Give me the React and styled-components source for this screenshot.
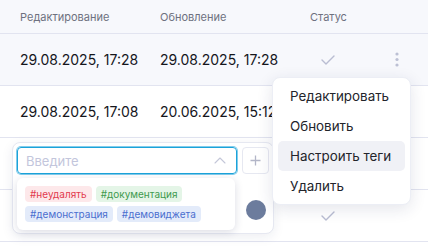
import * as React from "react";
import styled, { createGlobalStyle } from "styled-components";

const Global = createGlobalStyle`
  body {
    margin: 0;
    background: #ffffff;
    font-family: Inter, "Noto Sans", sans-serif;
  }
`;

const Table = styled.div`
  position: relative;
  width: 428px;
  height: 250px;
  overflow: hidden;
`;

const Row = styled.div`
  display: grid;
  grid-template-columns: 140px 150px 36px 1fr 62px;
  align-items: center;
  box-sizing: border-box;
  height: ${(p) => (p.head ? "34px" : "52px")};
  padding-left: 20px;
  border-bottom: 1px solid #e2e4f0;
  background: ${(p) => (p.tinted ? "#f7f8fc" : "#ffffff")};
`;

const HeadCell = styled.div`
  font-size: 11px;
  color: #6e717f;
  white-space: nowrap;
`;

const Cell = styled.div`
  font-size: 14px;
  color: #15161c;
  white-space: nowrap;
`;

const IconCell = styled.div`
  display: flex;
  justify-content: center;
  align-items: center;
`;

const Menu = styled.div`
  position: absolute;
  left: 272px;
  top: 77px;
  width: 139px;
  box-sizing: border-box;
  padding: 3px 5px;
  background: #ffffff;
  border: 1px solid #eceef5;
  border-radius: 8px;
  box-shadow: 0 4px 16px rgba(30, 40, 90, 0.12);
`;

const MenuItem = styled.div`
  height: 30px;
  display: flex;
  align-items: center;
  padding-left: 12px;
  border-radius: 5px;
  font-size: 13.4px;
  color: #23242b;
  background: ${(p) => (p.active ? "#f0f1f6" : "transparent")};
`;

const TagCard = styled.div`
  position: absolute;
  left: 12px;
  top: 142px;
  box-sizing: border-box;
  display: grid;
  grid-template-columns: 220px 27px;
  column-gap: 5px;
  row-gap: 26px;
  padding: 4px 4px 13px 4px;
  background: #ffffff;
  border: 1px solid #e6e8f1;
  border-radius: 8px;
  box-shadow: 0 3px 12px rgba(30, 40, 90, 0.08);
`;

const Input = styled.div`
  box-sizing: border-box;
  height: 27px;
  display: flex;
  align-items: center;
  justify-content: space-between;
  padding: 0 10px 0 8px;
  border: 1px solid #1ba3da;
  box-shadow: 0 0 0 1px rgba(27, 163, 218, 0.55);
  border-radius: 4px;
  font-size: 13px;
  color: #c3c6dc;
`;

const AddButton = styled.div`
  box-sizing: border-box;
  height: 27px;
  display: flex;
  align-items: center;
  justify-content: center;
  border: 1px solid #e6e8f1;
  border-radius: 4px;
`;

const Swatch = styled.div`
  grid-column: 2;
  justify-self: center;
  width: 20px;
  height: 20px;
  border-radius: 50%;
  background: #6c7c9d;
`;

const Dropdown = styled.div`
  position: absolute;
  left: 4px;
  top: 35px;
  width: 218px;
  box-sizing: border-box;
  padding: 8px 8px;
  display: flex;
  flex-wrap: wrap;
  gap: 4px;
  background: #ffffff;
  border-radius: 6px;
  box-shadow: 0 2px 8px rgba(30, 40, 90, 0.16);
`;

const tagColors = {
  red: ["#fde8ea", "#e23b4e"],
  green: ["#e4f5e7", "#3f9a4e"],
  blue: ["#e3ebfa", "#4b6fcf"],
};

const Tag = styled.span`
  height: 16px;
  display: inline-flex;
  align-items: center;
  padding: 0 5px;
  border-radius: 4px;
  font-size: 10px;
  background: ${(p) => tagColors[p.tone][0]};
  color: ${(p) => tagColors[p.tone][1]};
`;

const CheckIcon = () => (
  <svg width="14" height="10" viewBox="0 0 14 10" fill="none">
    <path d="M1 5l4 4 8-8" stroke="#b9bdd2" strokeWidth="1.4" strokeLinecap="round" strokeLinejoin="round" />
  </svg>
);

const Dots = () => (
  <svg width="4" height="15" viewBox="0 0 4 15">
    <circle cx="2" cy="2" r="1.6" fill="#bcc0d4" />
    <circle cx="2" cy="7.5" r="1.6" fill="#bcc0d4" />
    <circle cx="2" cy="13" r="1.6" fill="#bcc0d4" />
  </svg>
);

const Chevron = () => (
  <svg width="12" height="7" viewBox="0 0 12 7" fill="none">
    <path d="M1 6l5-5 5 5" stroke="#c4c7d8" strokeWidth="1.1" strokeLinecap="round" strokeLinejoin="round" />
  </svg>
);

const Plus = () => (
  <svg width="11" height="11" viewBox="0 0 11 11" fill="none">
    <path d="M5.5 0.5v10M0.5 5.5h10" stroke="#b3b6c8" strokeWidth="1.3" />
  </svg>
);

// rows 3 and 4 sit under the tag popover, so their dates are not shown
const rows = [
  { edit: "29.08.2025, 17:28", upd: "29.08.2025, 17:28", hover: true },
  { edit: "29.08.2025, 17:08", upd: "20.06.2025, 15:12" },
  { edit: "", upd: "" },
  { edit: "", upd: "" },
];

export default function App() {
  return (
    <>
      <Global />
      <Table>
        <Row head tinted>
          <HeadCell>Редактирование</HeadCell>
          <HeadCell>Обновление</HeadCell>
          <HeadCell>Статус</HeadCell>
        </Row>
        {rows.map((r, i) => (
          <Row key={i} tinted={r.hover}>
            <Cell>{r.edit}</Cell>
            <Cell>{r.upd}</Cell>
            <IconCell>
              <CheckIcon />
            </IconCell>
            <div />
            <IconCell>{r.hover && <Dots />}</IconCell>
          </Row>
        ))}

        <TagCard>
          <Input>
            Введите
            <Chevron />
          </Input>
          <AddButton>
            <Plus />
          </AddButton>
          <Swatch />
          <Dropdown>
            <Tag tone="red">#неудалять</Tag>
            <Tag tone="green">#документация</Tag>
            <Tag tone="blue">#демонстрация</Tag>
            <Tag tone="blue">#демовиджета</Tag>
          </Dropdown>
        </TagCard>

        <Menu>
          <MenuItem>Редактировать</MenuItem>
          <MenuItem>Обновить</MenuItem>
          <MenuItem active>Настроить теги</MenuItem>
          <MenuItem>Удалить</MenuItem>
        </Menu>
      </Table>
    </>
  );
}
